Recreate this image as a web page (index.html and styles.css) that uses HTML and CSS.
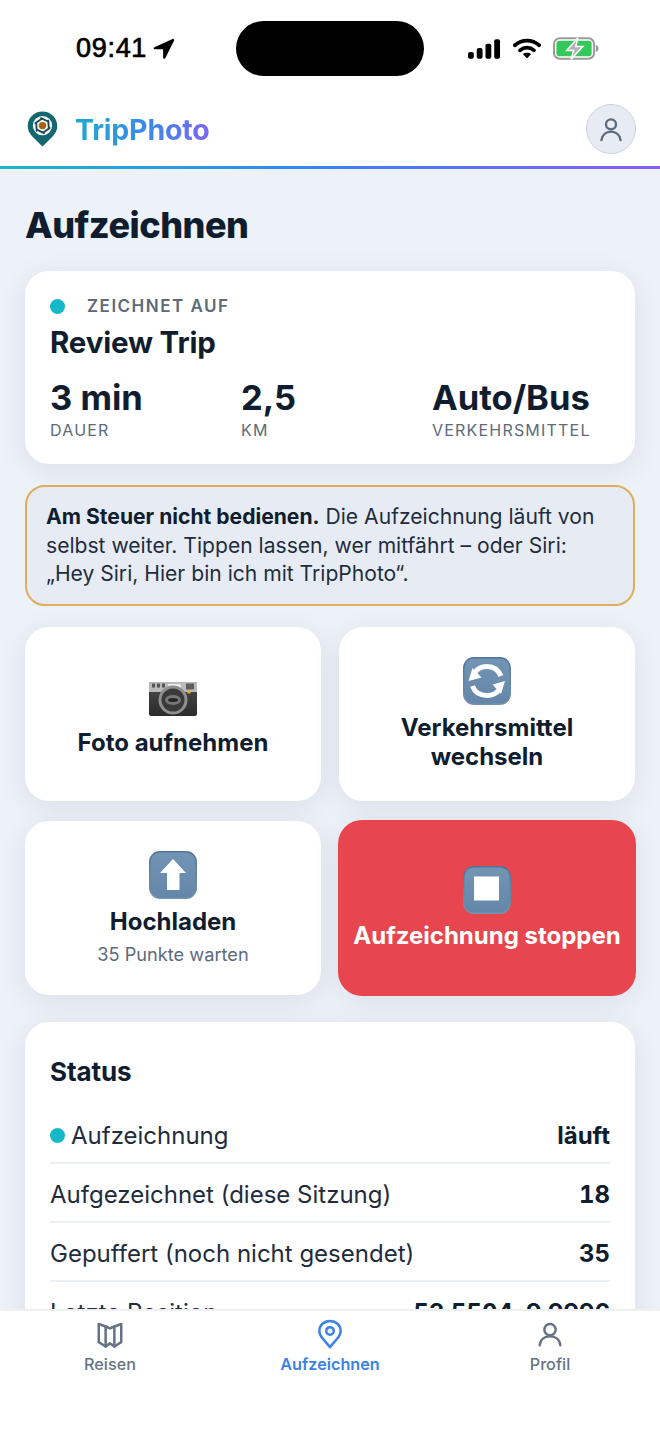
FILE: index.html
```html
<!DOCTYPE html>
<html lang="de">
<head>
<meta charset="utf-8">
<title>TripPhoto – Aufzeichnen</title>
<link rel="stylesheet" href="styles.css">
</head>
<body>
<div class="app">
  <div class="statusbar">
    <div class="status-left">
      <span class="clock">09:41</span>
      <svg class="loc-arrow" viewBox="0 0 22 22"><path d="M20.500 1 1.500 9.600c-1.300.6-.9 2.300.5 2.300h8c.4 0 .6.200.6.600v8c0 1.400 1.800 1.800 2.400.5L22 2.800c.5-1.200-.4-2.300-1.500-1.800z" fill="#000"/></svg>
    </div>
    <div class="island"></div>
    <div class="status-right">
      <svg class="signal" viewBox="0 0 34 20"><rect x="0" y="13" width="6" height="7" rx="2"/><rect x="9" y="9" width="6" height="11" rx="2"/><rect x="18" y="4.500" width="6" height="15.500" rx="2"/><rect x="27" y="0" width="6" height="20" rx="2"/></svg>
      <svg class="wifi" viewBox="0 0 30 22"><path d="M2 7.500C9.500 .8 20.500 .8 28 7.500" fill="none" stroke="#000" stroke-width="4" stroke-linecap="round"/><path d="M7.500 13c4.400-3.800 10.600-3.800 15 0" fill="none" stroke="#000" stroke-width="4" stroke-linecap="round"/><path d="M10.500 17c2.700-2 6.300-2 9 0L15 21.800z" fill="#000"/></svg>
      <svg class="battery" viewBox="0 0 47 23">
        <rect x="1" y="1" width="41" height="21" rx="6" fill="none" stroke="#9a9a9a" stroke-width="2"/>
        <rect x="3.500" y="3.500" width="36" height="16" rx="3.500" fill="#34c759"/>
        <path d="M43.800 8v7c1.600-.4 2.700-1.800 2.700-3.500S45.400 8.400 43.800 8z" fill="#9a9a9a"/>
        <path d="M25.500 .5 14 13.500h7L18.500 22.500 30.500 9.500h-7.200z" fill="#b4b4b8" stroke="#fff" stroke-width="1.500"/>
      </svg>
    </div>
  </div>

  <header class="topbar">
    <div class="brand">
      <svg class="brand-pin" viewBox="0 0 32 37">
        <path d="M16 .5C7.500.5.800 7 .800 15.400c0 6 3.400 9.800 7.400 13.400L16 36.500l7.800-7.700c4-3.600 7.400-7.400 7.400-13.400C31.200 7 24.500.5 16 .5z" fill="#14666f"/>
        <circle cx="16" cy="15" r="10" fill="#f4f7f6"/>
        <!-- camera aperture: six dark blades round a brown centre -->
        <g stroke="#1d4a50" stroke-width="1.900" stroke-linecap="round" fill="none">
          <path id="blade" d="M14.500 7.300 21.800 10.800"/>
          <use href="#blade" transform="rotate(60 16 15)"/>
          <use href="#blade" transform="rotate(120 16 15)"/>
          <use href="#blade" transform="rotate(180 16 15)"/>
          <use href="#blade" transform="rotate(240 16 15)"/>
          <use href="#blade" transform="rotate(300 16 15)"/>
        </g>
        <circle cx="16" cy="15" r="3.800" fill="#a8620f"/>
      </svg>
      <span class="brand-name">TripPhoto</span>
    </div>
    <button class="avatar" type="button" aria-label="Profil">
      <svg viewBox="0 0 24 24" class="line-icon"><circle cx="12" cy="8" r="4.300"/><path d="M3.800 21.500c.7-4.600 4-7.300 8.200-7.300s7.500 2.700 8.200 7.300"/></svg>
    </button>
  </header>

  <main class="content">
    <h1 class="page-title">Aufzeichnen</h1>

    <section class="card trip">
      <div class="trip-state"><span class="dot"></span><span>ZEICHNET AUF</span></div>
      <div class="trip-name">Review Trip</div>
      <div class="trip-stats">
        <div class="stat"><div class="stat-value">3 min</div><div class="stat-label">DAUER</div></div>
        <div class="stat"><div class="stat-value">2,5</div><div class="stat-label">KM</div></div>
        <div class="stat"><div class="stat-value">Auto/Bus</div><div class="stat-label">VERKEHRSMITTEL</div></div>
      </div>
    </section>

    <p class="notice"><strong>Am Steuer nicht bedienen.</strong> Die Aufzeichnung läuft von selbst weiter. Tippen lassen, wer mitfährt – oder Siri: „Hey Siri, Hier bin ich mit TripPhoto“.</p>

    <div class="actions">
      <button class="action" type="button">
        <svg class="emoji" viewBox="0 0 48 48">
          <defs><linearGradient id="camBody" x1="0" y1="0" x2="0" y2="1"><stop offset="0" stop-color="#4a4a4a"/><stop offset="1" stop-color="#2b2b2b"/></linearGradient></defs>
          <g transform="translate(0 3)">
            <rect x="0" y="7" width="48" height="34" rx="2" fill="url(#camBody)"/>
            <path d="M0 17V9c0-1.200.8-2 2-2h44c1.200 0 2 .8 2 2v8z" fill="#b9b9b9"/>
            <rect x="3" y="8.500" width="3" height="4" fill="#555"/><rect x="8" y="8.500" width="3" height="4" fill="#555"/><rect x="13" y="8.500" width="3" height="4" fill="#555"/>
            <rect x="19" y="9" width="13" height="4" rx="1" fill="#ececec"/>
            <rect x="37" y="8.500" width="8" height="6" fill="#5d5d5d"/>
            <circle cx="40" cy="17" r="1.800" fill="#e3b23c"/>
            <circle cx="24" cy="25" r="14.500" fill="#8f8f8f"/>
            <circle cx="24" cy="25" r="11.500" fill="#3a3a3a"/>
            <ellipse cx="24" cy="25" rx="8" ry="5" fill="#777"/>
            <ellipse cx="24" cy="25" rx="5" ry="2" fill="#262626"/>
          </g>
        </svg>
        <span class="action-title">Foto aufnehmen</span>
      </button>
      <button class="action" type="button">
        <svg class="emoji" viewBox="0 0 48 48">
          <use href="#keycap"/>
          <path d="M38 19C35 12 29 9.500 24 9.500c-6 0-10 2.500-12.500 6.500" fill="none" stroke="#fff" stroke-width="5"/>
          <polygon points="5.500,24 9.500,11 18.500,20.500" fill="#fff"/>
          <path d="M9.500 29c2.500 7 8.500 9.500 14.500 9.500 6 0 10-2.500 12.500-6.500" fill="none" stroke="#fff" stroke-width="5"/>
          <polygon points="42,24 38,37 29.500,27.500" fill="#fff"/>
        </svg>
        <span class="action-title">Verkehrsmittel<br>wechseln</span>
      </button>
      <button class="action" type="button">
        <svg class="emoji" viewBox="0 0 48 48">
          <use href="#keycap"/>
          <path d="M24 8 37 22H30.500V39H18V22H11z" fill="#fff"/>
        </svg>
        <span class="action-title">Hochladen</span>
        <span class="action-sub">35 Punkte warten</span>
      </button>
      <button class="action action-stop" type="button">
        <svg class="emoji" viewBox="0 0 48 48">
          <use href="#keycap"/>
          <rect x="11" y="10.500" width="25" height="24" fill="#fff"/>
        </svg>
        <span class="action-title">Aufzeichnung stoppen</span>
      </button>
    </div>

    <section class="card status">
      <h2 class="status-title">Status</h2>
      <div class="status-row"><span class="status-key"><span class="dot dot-small"></span>Aufzeichnung</span><span class="status-val">läuft</span></div>
      <div class="status-row"><span class="status-key">Aufgezeichnet (diese Sitzung)</span><span class="status-val">18</span></div>
      <div class="status-row"><span class="status-key">Gepuffert (noch nicht gesendet)</span><span class="status-val">35</span></div>
      <div class="status-row"><span class="status-key">Letzte Position</span><span class="status-val">53,5504, 9,9996</span></div>
    </section>
  </main>

  <nav class="tabbar">
    <a class="tab"><svg viewBox="0 0 24 24" class="tab-icon line-icon"><path d="M3 4 8.500 6 12 7.500 15.500 6 21 4v14.500l-5.500 3.500L12 19.500 8.500 22 3 18.500z"/><path d="M8.500 6v16M15.500 6v16"/></svg><span>Reisen</span></a>
    <a class="tab tab-active"><svg viewBox="0 0 24 24" class="tab-icon line-icon"><path d="M12 22.500 6.500 16C4.500 13.700 3.500 11.600 3.500 9.500 3.500 5 7.200 1.500 12 1.500S20.500 5 20.500 9.500c0 2.100-1 4.200-3 6.500z"/><circle cx="12" cy="9.500" r="3"/></svg><span>Aufzeichnen</span></a>
    <a class="tab"><svg viewBox="0 0 24 24" class="tab-icon line-icon"><circle cx="12" cy="8.500" r="4.500"/><path d="M3.800 21c.4-4.600 3.700-7.200 8.200-7.200s7.800 2.600 8.200 7.200"/></svg><span>Profil</span></a>
  </nav>
</div>

<svg class="defs" width="0" height="0" aria-hidden="true">
  <defs>
    <linearGradient id="keyEdge" x1="0" y1="0" x2="0" y2="1"><stop offset="0" stop-color="#4f7396"/><stop offset="1" stop-color="#7593b0"/></linearGradient>
    <linearGradient id="keyFill" x1="0" y1="0" x2="0" y2="1"><stop offset="0" stop-color="#7295b6"/><stop offset="1" stop-color="#6487a9"/></linearGradient>
    <g id="keycap">
      <rect x="0" y="0" width="48" height="48" rx="11" fill="url(#keyEdge)"/>
      <rect x="1.500" y="1.500" width="45" height="45" rx="9.500" fill="url(#keyFill)"/>
    </g>
  </defs>
</svg>
</body>
</html>
```
FILE: styles.css
```css
* { box-sizing: border-box; }

html, body {
  margin: 0;
  padding: 0;
  background: #fff;
}

body {
  font-family: Inter, "Liberation Sans", sans-serif;
  color: #0f1d2e;
}

.app {
  width: 660px;
  height: 1434px;
  display: flex;
  flex-direction: column;
  overflow: hidden;
  background: #edf1f8;
}

.defs { position: absolute; }

/* Device status bar */
.statusbar {
  height: 96px;
  flex: none;
  background: #fff;
  display: flex;
  align-items: flex-start;
  padding: 21px 62px 0 76px;
}

.status-left {
  width: 160px;
  flex: none;
  display: flex;
  align-items: center;
  gap: 6px;
  height: 55px;
}

.clock {
  font-family: "Liberation Sans", sans-serif;
  font-size: 27px;
  font-weight: 400;
  color: #000;
  -webkit-text-stroke: .7px #000;
  letter-spacing: .7px;
}

.loc-arrow { width: 21px; height: 21px; }

.island {
  width: 188px;
  flex: none;
  height: 55px;
  border-radius: 28px;
  background: #000;
}

.status-right {
  display: flex;
  align-items: center;
  height: 55px;
  padding-left: 44px;
  gap: 12px;
}

.signal { width: 33px; height: 20px; fill: #000; flex: none; }
.wifi { width: 28px; height: 21px; flex: none; }
.battery { width: 46px; height: 23px; flex: none; }

/* App header */
.topbar {
  height: 73px;
  flex: none;
  background: #fff;
  border-bottom: 3px solid;
  border-image: linear-gradient(90deg, #1cb5c9 0%, #3b82f6 50%, #8b5cf6 100%) 1;
  display: flex;
  align-items: center;
  justify-content: space-between;
  padding: 0 24px 4px 27px;
}

.brand {
  display: flex;
  align-items: center;
  gap: 17px;
}

.brand-pin { width: 31px; height: 36px; flex: none; }

.brand-name {
  font-size: 28.500px;
  font-weight: 700;
  letter-spacing: -.2px;
  background: linear-gradient(90deg, #1fa9cf, #3b8ae8 55%, #7a66f0);
  -webkit-background-clip: text;
  background-clip: text;
  color: transparent;
}

.avatar {
  width: 50px;
  height: 50px;
  border-radius: 50%;
  border: 1px solid #cdd3dc;
  background: #e7ecf4;
  padding: 0;
  display: flex;
  align-items: center;
  justify-content: center;
  color: #5c6a7a;
}

.avatar svg { width: 28px; height: 28px; }

.line-icon {
  fill: none;
  stroke: currentColor;
  stroke-width: 2;
  stroke-linecap: round;
  stroke-linejoin: round;
}

/* Scrolling content */
.content {
  flex: 1;
  min-height: 0;
  overflow: hidden;
  padding: 35px 25px 0;
}

.page-title {
  margin: 0 0 24px;
  font-size: 36px;
  line-height: 43px;
  font-weight: 800;
  letter-spacing: -.5px;
  color: #0f1d2e;
}

.card {
  background: #fff;
  border-radius: 24px;
  box-shadow: 0 6px 30px rgba(15, 29, 46, .08);
}

.trip {
  height: 193px;
  padding: 25px 25px 0;
}

.trip-state {
  display: flex;
  align-items: center;
  gap: 22px;
  font-size: 17px;
  line-height: 20px;
  font-weight: 600;
  letter-spacing: 1.500px;
  color: #5c6a7a;
}

.dot {
  width: 15px;
  height: 15px;
  border-radius: 50%;
  background: #14b8c8;
  flex: none;
}

.trip-name {
  margin-top: 9px;
  font-size: 29.500px;
  line-height: 34px;
  font-weight: 700;
  letter-spacing: -.2px;
}

.trip-stats {
  margin-top: 19px;
  display: grid;
  grid-template-columns: repeat(3, 178px);
  column-gap: 13px;
}

.stat-value {
  font-size: 34.500px;
  line-height: 40px;
  font-weight: 700;
}

.stat-label {
  margin-top: 2px;
  font-size: 16px;
  line-height: 20px;
  letter-spacing: 1.200px;
  color: #5c6a7a;
}

.notice {
  margin: 21px 0 0;
  height: 121px;
  padding: 16px 19px 0;
  border: 2px solid #e0ad5c;
  border-radius: 20px;
  background: #e7ecf4;
  font-size: 21.100px;
  line-height: 28.500px;
  color: #1f2c3d;
}

.notice strong {
  font-weight: 700;
  color: #0f1d2e;
}

/* Action tiles */
.actions {
  margin-top: 21px;
  display: grid;
  grid-template-columns: 296px 296px;
  justify-content: space-between;
  grid-auto-rows: 174px;
  row-gap: 20px;
}

.action {
  font-family: inherit;
  color: #0f1d2e;
  background: #fff;
  border: none;
  border-radius: 24px;
  box-shadow: 0 6px 30px rgba(15, 29, 46, .08);
  padding: 0;
  display: flex;
  flex-direction: column;
  align-items: center;
  justify-content: center;
}

.emoji { width: 48px; height: 48px; flex: none; }

.action-title {
  margin-top: 8px;
  font-size: 24px;
  line-height: 29px;
  font-weight: 700;
}

.action-sub {
  margin-top: 7px;
  font-size: 18.200px;
  line-height: 22px;
  color: #5c6a7a;
}

.action-stop {
  background: #e8464f;
  color: #fff;
  margin: -1px;
}

.action-stop .emoji { margin-bottom: -1px; }

/* Status list */
.status {
  margin-top: 27px;
  padding: 1px 25px 0;
}

.status-title {
  margin: 33px 0 17px;
  font-size: 26px;
  line-height: 32px;
  font-weight: 700;
  letter-spacing: -.1px;
}

.status-row {
  height: 59px;
  padding-top: 3px;
  display: flex;
  align-items: center;
  justify-content: space-between;
  border-bottom: 2px solid #eceff3;
  font-size: 24px;
}

.status-key {
  display: flex;
  align-items: center;
  color: #1f2c3d;
}

.dot-small { margin-right: 6px; }

.status-val {
  font-weight: 700;
  font-variant-numeric: tabular-nums;
  color: #0f1d2e;
}

/* Bottom navigation */
.tabbar {
  height: 125px;
  flex: none;
  background: #fff;
  border-top: 2px solid #eef0f4;
  display: grid;
  grid-template-columns: repeat(3, 1fr);
  padding-top: 8px;
}

.tab {
  display: flex;
  flex-direction: column;
  align-items: center;
  gap: 5px;
  font-size: 16.200px;
  line-height: 20px;
  font-weight: 500;
  color: #667384;
}

.tab-icon { width: 30px; height: 30px; }

.tab-active {
  color: #3b82e6;
  font-weight: 600;
}
```
